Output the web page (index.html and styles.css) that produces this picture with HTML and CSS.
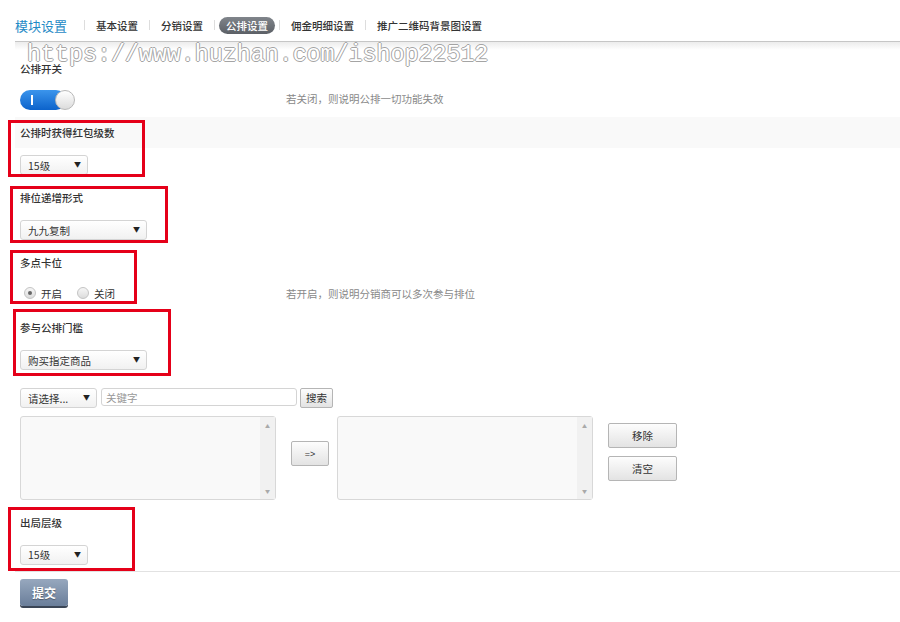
FILE: index.html
```html
<!DOCTYPE html>
<html lang="zh-CN">
<head>
    <meta charset="UTF-8">
    <title>模块设置 - 公排设置</title>
    <link rel="stylesheet" href="styles.css">
</head>
<body>
    <div class="page">
        <div class="tabs">
            <span class="tabs-title">模块设置</span>
            <span class="sep"></span>
            <a class="tab">基本设置</a>
            <span class="sep"></span>
            <a class="tab">分销设置</a>
            <span class="sep"></span>
            <a class="tab active">公排设置</a>
            <span class="sep"></span>
            <a class="tab">佣金明细设置</a>
            <span class="sep"></span>
            <a class="tab">推广二维码背景图设置</a>
        </div>

        <div class="watermark">https://www.huzhan.com/ishop22512</div>

        <form class="form">
            <div class="group">
                <div class="label-row">公排开关</div>
                <div class="ctrl-row">
                    <div class="cell">
                        <span class="switch"><span class="switch-on"></span><span class="knob"></span></span>
                    </div>
                    <div class="help up">若关闭，则说明公排一切功能失效</div>
                </div>
            </div>

            <div class="group">
                <div class="label-row shaded">公排时获得红包级数</div>
                <div class="ctrl-row">
                    <div class="cell">
                        <span class="select-wrap w68"><select><option>15级</option></select></span>
                    </div>
                </div>
                <span class="mark mark-1"></span>
            </div>

            <div class="group">
                <div class="label-row">排位递增形式</div>
                <div class="ctrl-row">
                    <div class="cell">
                        <span class="select-wrap w127"><select><option>九九复制</option></select></span>
                    </div>
                </div>
                <span class="mark mark-2"></span>
            </div>

            <div class="group">
                <div class="label-row">多点卡位</div>
                <div class="ctrl-row">
                    <div class="cell radios">
                        <label class="radio"><span class="dot checked"></span>开启</label>
                        <label class="radio"><span class="dot"></span>关闭</label>
                    </div>
                    <div class="help up">若开启，则说明分销商可以多次参与排位</div>
                </div>
                <span class="mark mark-3"></span>
            </div>

            <div class="group">
                <div class="label-row">参与公排门槛</div>
                <div class="ctrl-row">
                    <div class="cell">
                        <span class="select-wrap w127"><select><option>购买指定商品</option></select></span>
                    </div>
                </div>
                <span class="mark mark-4"></span>
            </div>

            <div class="search-row">
                <span class="select-wrap w77"><select><option>请选择...</option></select></span>
                <input class="keyword" type="text" placeholder="关键字">
                <button type="button" class="btn btn-search">搜索</button>
            </div>

            <div class="picker">
                <div class="listbox">
                    <div class="list-body"></div>
                    <div class="scroll"><span>&#9650;</span><span>&#9660;</span></div>
                </div>
                <button type="button" class="btn btn-move">=&gt;</button>
                <div class="listbox">
                    <div class="list-body"></div>
                    <div class="scroll"><span>&#9650;</span><span>&#9660;</span></div>
                </div>
                <div class="picker-actions">
                    <button type="button" class="btn btn-wide">移除</button>
                    <button type="button" class="btn btn-wide">清空</button>
                </div>
            </div>

            <div class="group last">
                <div class="label-row">出局层级</div>
                <div class="ctrl-row">
                    <div class="cell">
                        <span class="select-wrap w68"><select><option>15级</option></select></span>
                    </div>
                </div>
                <span class="mark mark-5"></span>
            </div>

            <div class="submit-row">
                <button type="button" class="btn-submit">提交</button>
            </div>
        </form>
    </div>
</body>
</html>
```

FILE: styles.css
```css
body {
    margin: 0;
    padding: 0;
    background: #fff;
    font-family: "Noto Sans CJK SC", "Liberation Sans", sans-serif;
    font-size: 10.5px;
    color: #333;
}

.page {
    position: relative;
    padding-left: 15px;
    height: 622px;
    overflow: hidden;
}

/* top tab bar */
.tabs {
    display: flex;
    align-items: center;
    height: 32px;
    padding-top: 9px;
    border-bottom: 1px solid #c6c6c6;
    position: relative;
}

.tabs::after {
    content: "";
    position: absolute;
    left: 0;
    right: 0;
    top: 42px;
    height: 8px;
    background: linear-gradient(#ececec, #fff);
}

.tabs-title {
    font-size: 13px;
    color: #1f8ac6;
    margin-right: 13px;
}

.sep {
    width: 1px;
    height: 10px;
    background: #ddd;
    margin: 0 4px;
}

.tab {
    padding: 0 7px;
    height: 17px;
    line-height: 17px;
    border-radius: 9px;
    color: #333;
    font-weight: 500;
}

.tab.active {
    background: linear-gradient(#80858b, #5c6066);
    color: #fff;
}

/* site stamp drawn as hollow letters */
.watermark {
    position: absolute;
    left: 27px;
    top: 40px;
    font-family: "Liberation Mono", monospace;
    font-size: 23.3px;
    line-height: 30px;
    color: #fff;
    text-shadow:
        -1px 0 0 #a4a4a4,
        1px 0 0 #a4a4a4,
        0 -1px 0 #a4a4a4,
        0 1px 0 #a4a4a4;
    z-index: 2;
    white-space: nowrap;
}

/* form */
.form {
    padding-top: 11px;
}

.group {
    position: relative;
}

.label-row {
    height: 31px;
    line-height: 31px;
    padding-left: 5px;
    font-weight: 500;
    color: #333;
}

.label-row.shaded {
    background: #f9f9f9;
}

.ctrl-row {
    display: grid;
    grid-template-columns: 271px 1fr;
    align-items: center;
    height: 34px;
}

.group:first-child .ctrl-row {
    height: 33px;
}

.cell {
    padding-left: 5px;
    display: flex;
    align-items: center;
}

.help {
    color: #888;
}

.help.up {
    margin-top: -4px;
}

/* toggle switch */
.switch {
    position: relative;
    display: inline-block;
    width: 55px;
    height: 20px;
    margin-top: -2px;
}

.switch-on {
    position: absolute;
    left: 0;
    top: 0;
    width: 46px;
    height: 20px;
    border-radius: 10px;
    background: linear-gradient(#3b95ec, #0c63cb);
}

.switch-on::before {
    content: "";
    position: absolute;
    left: 11px;
    top: 5px;
    width: 2px;
    height: 10px;
    background: #fff;
}

.knob {
    position: absolute;
    right: 0;
    top: 0;
    width: 18px;
    height: 18px;
    border: 1px solid #b8b8b8;
    border-radius: 50%;
    background: linear-gradient(#fff, #dcdcdc);
}

/* selects */
.select-wrap {
    position: relative;
    display: inline-block;
    height: 20px;
}

.select-wrap select {
    appearance: none;
    -webkit-appearance: none;
    width: 100%;
    height: 20px;
    padding: 0 0 0 7px;
    border: 1px solid #d4d4d4;
    border-radius: 3px;
    background: linear-gradient(#fff, #f1f1f1);
    font-family: inherit;
    font-size: 10.5px;
    color: #333;
}

.select-wrap::after {
    content: "\25BC";
    position: absolute;
    right: 7px;
    top: 4px;
    font-size: 7px;
    color: #222;
    pointer-events: none;
}

.w68 { width: 68px; }
.w77 { width: 77px; }
.w127 { width: 127px; }

/* radios */
.radios {
    gap: 15px;
    padding-left: 9px;
    margin-top: -4px;
}

.radio {
    display: flex;
    align-items: center;
    gap: 5px;
    color: #333;
}

.dot {
    position: relative;
    box-sizing: border-box;
    width: 12px;
    height: 12px;
    border: 1px solid #c4c4c4;
    border-radius: 50%;
    background: linear-gradient(#f6f6f6, #dcdcdc);
}

.dot.checked::after {
    content: "";
    position: absolute;
    left: 3px;
    top: 3px;
    width: 4px;
    height: 4px;
    border-radius: 50%;
    background: #666;
}

/* red frames round the changed settings */
.mark {
    position: absolute;
    border: 3px solid #e50019;
    pointer-events: none;
}

.mark-1 { left: -7px; top: 3px; width: 131px; height: 51px; }
.mark-2 { left: -5px; top: 4px; width: 152px; height: 51px; }
.mark-3 { left: -5px; top: 3px; width: 121px; height: 48px; }
.mark-4 { left: -2px; top: -3px; width: 152px; height: 61px; }
.mark-5 { left: -7px; top: 0; width: 121px; height: 58px; }

/* product search and picker */
.search-row {
    display: flex;
    align-items: center;
    padding: 11px 0 0 5px;
    height: 20px;
}

.keyword {
    width: 196px;
    height: 18px;
    margin-left: 4px;
    box-sizing: border-box;
    border: 1px solid #d4d4d4;
    border-radius: 3px;
    padding: 0 4px;
    font-family: inherit;
    font-size: 10.5px;
    margin-top: -2px;
}

.keyword::placeholder {
    color: #999;
}

.btn {
    box-sizing: border-box;
    border: 1px solid #b5b5b5;
    border-radius: 2px;
    background: linear-gradient(#fdfdfd, #e3e3e3);
    font-family: inherit;
    font-size: 10.5px;
    color: #333;
    padding: 0;
}

.btn-search {
    width: 33px;
    height: 20px;
    margin-left: 3px;
    margin-top: -1px;
}

.picker {
    display: flex;
    align-items: flex-start;
    padding: 8px 0 0 5px;
}

.listbox {
    display: flex;
    box-sizing: border-box;
    width: 256px;
    height: 84px;
    border: 1px solid #d8d8d8;
    border-radius: 3px;
    background: #f9f9f9;
}

.list-body {
    flex: 1;
}

.scroll {
    width: 15px;
    display: flex;
    flex-direction: column;
    justify-content: space-between;
    align-items: center;
    padding: 5px 0;
    background: #f1f1f1;
    font-size: 5px;
    color: #a9a9a9;
}

.btn-move {
    width: 38px;
    height: 25px;
    margin: 25px 8px 0 15px;
    font-family: "Liberation Sans", sans-serif;
    font-size: 9px;
}

.picker-actions {
    display: flex;
    flex-direction: column;
    gap: 8px;
    margin: 7px 0 0 15px;
}

.btn-wide {
    width: 69px;
    height: 25px;
}

.group.last {
    margin-top: 7px;
    border-bottom: 1px solid #e2e2e2;
}

.group.last .ctrl-row {
    height: 33px;
}

/* submit */
.submit-row {
    padding: 7px 0 0 5px;
}

.btn-submit {
    width: 48px;
    height: 27px;
    border: none;
    border-radius: 3px;
    background: linear-gradient(#97a8be, #6a7e9a);
    box-shadow: 0 2px 0 #3b4656;
    color: #fff;
    font-family: inherit;
    font-size: 12px;
    font-weight: bold;
    text-shadow: 0 1px 1px rgba(0, 0, 0, 0.35);
}
```
